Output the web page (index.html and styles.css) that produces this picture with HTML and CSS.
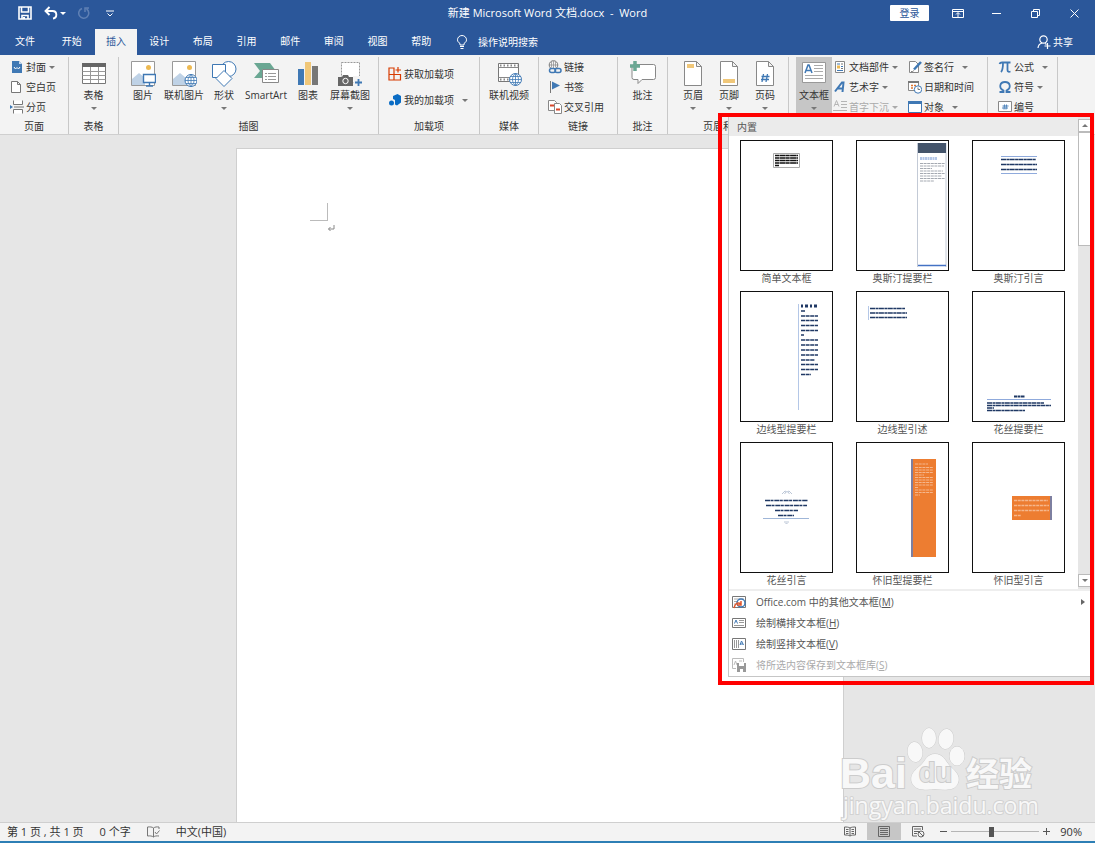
FILE: index.html
```html
<!DOCTYPE html>
<html lang="zh-CN">
<head>
    <meta charset="UTF-8">
    <meta name="viewport" content="width=device-width, initial-scale=1.0">
    <title>新建 Microsoft Word 文档.docx - Word</title>
    <link rel="stylesheet" href="styles.css">
</head>
<body>
    <div class="app">
        <header class="titlebar">
            <div class="quick-access">
                <button class="qa-button" aria-label="保存">
                    <svg width="14" height="14" viewBox="0 0 14 14" fill="none" stroke="#fff" stroke-width="1.6"><path d="M1 1h12v12H1zM3.500 1v5h7V1M4 13V9.500h6V13"/><path d="M6 11v2" stroke-width="2"/></svg>
                </button>
                <button class="qa-button" aria-label="撤消">
                    <svg width="14" height="14" viewBox="0 0 14 14" fill="none" stroke="#fff" stroke-width="1.900"><path d="M5.500 1L1.500 5l4 4M2 5h6.500c5 0 5 7 .500 7.500"/></svg>
                    <i class="caret"></i>
                </button>
                <button class="qa-button" aria-label="重复">
                    <svg width="12" height="12" viewBox="0 0 12 12" fill="none" stroke="#5f80b4" stroke-width="1.500"><path d="M4 1.500a5 5 0 1 0 4.500.500M7 5V1h4"/></svg>
                </button>
                <button class="qa-button" aria-label="自定义快速访问工具栏">
                    <svg width="8" height="7" viewBox="0 0 8 7" fill="none" stroke="#fff"><path d="M0 1h8M1.500 3.500L4 6l2.500-2.500"/></svg>
                </button>
            </div>
            <h1 class="doc-title">新建 Microsoft Word 文档.docx&nbsp; -&nbsp; Word</h1>
            <div class="window-controls">
                <button class="login">登录</button>
                <button class="win-button" aria-label="功能区显示选项"><svg width="12" height="9" viewBox="0 0 12 9" fill="none" stroke="#fff"><path d="M.5.500h11v8H.5zM.5 2.500h11M6 8V4M4 5.500l2-2 2 2"/></svg></button>
                <button class="win-button" aria-label="最小化"><svg width="9" height="9" viewBox="0 0 9 9" stroke="#fff"><path d="M0 4.500h9"/></svg></button>
                <button class="win-button" aria-label="还原"><svg width="9" height="9" viewBox="0 0 9 9" fill="none" stroke="#fff"><path d="M.5 2.500h6v6h-6zM2.500 2.500v-2h6v6h-2"/></svg></button>
                <button class="win-button" aria-label="关闭"><svg width="9" height="9" viewBox="0 0 9 9" stroke="#fff"><path d="M.5.500l8 8M8.500.500l-8 8"/></svg></button>
            </div>
        </header>

        <nav class="tabbar">
            <button class="tab file-tab">文件</button>
            <div class="tabs">
                <button class="tab">开始</button>
                <button class="tab active">插入</button>
                <button class="tab">设计</button>
                <button class="tab">布局</button>
                <button class="tab">引用</button>
                <button class="tab">邮件</button>
                <button class="tab">审阅</button>
                <button class="tab">视图</button>
                <button class="tab">帮助</button>
            </div>
            <button class="tell-me">
                <svg width="12" height="14" viewBox="0 0 12 14" fill="none" stroke="#fff"><path d="M4 10V8.500C2.500 7.500 1.500 6.500 1.500 4.800a4.500 4.300 0 0 1 9 0c0 1.700-1 2.700-2.500 3.700V10zM4 11.500h4M4.500 13.500h3"/></svg>
                操作说明搜索
            </button>
            <button class="share">
                <svg width="14" height="14" viewBox="0 0 14 14" fill="none" stroke="#fff" stroke-width="1.200"><circle cx="6.500" cy="4.500" r="3.700"/><path d="M1 13c.3-3 2-4.500 4.300-5M8 8.500l1.500 1M10.500 8v6M7.500 11h6"/></svg>
                共享
            </button>
        </nav>

        <div class="ribbon">
            <section class="group pages">
                <div class="tools">
                    <div class="stack">
                        <button class="small"><svg width="14" height="14" viewBox="0 0 14 14"><path d="M2 1h7l3 3v9H2z" fill="#3f78b4"/><path d="M9 1v3h3" fill="#c5d9ee"/><path d="M4 7l1.500 2L7 7.500 8.500 9 10 7" fill="none" stroke="#fff"/></svg>封面<i class="caret"></i></button>
                        <button class="small"><svg width="14" height="14" viewBox="0 0 14 14" fill="#fff" stroke="#777"><path d="M1.500 1.500h6l3 3v8h-9zM7.500 1.500v3h3"/></svg>空白页</button>
                        <button class="small"><svg width="14" height="14" viewBox="0 0 14 14" fill="#fff" stroke="#777"><path d="M3.500.500v4h9v-4M3.500 13.500v-4h9v4M4 7h10"/><path d="M0 5l3 2-3 2z" fill="#3f78b4" stroke="none"/></svg>分页</button>
                    </div>
                </div>
                <h2 class="group-name">页面</h2>
            </section>

            <section class="group tables">
                <div class="tools">
                    <button class="big">
                        <svg width="26" height="26" viewBox="0 0 26 26"><path d="M1.500 2.500h23v20h-23z" fill="#fff" stroke="#777"/><path d="M1 2h24v4H1z" fill="#666"/><path d="M1.500 10.500h23M1.500 14.500h23M1.500 18.500h23M9.500 6v16M17.500 6v16" stroke="#999" fill="none"/></svg>
                        <span>表格</span><i class="caret"></i>
                    </button>
                </div>
                <h2 class="group-name">表格</h2>
            </section>

            <section class="group illustrations">
                <div class="tools">
                    <button class="big">
                        <svg width="26" height="26" viewBox="0 0 26 26"><path d="M1.500.500h23v24h-23z" fill="#fff" stroke="#999"/><path d="M2 24v-6l7-6 6 5v7z" fill="#bfd2e6"/><circle cx="18.500" cy="6.500" r="2.500" fill="#edb951"/><path d="M13.500 13.500h12v8h-12zM19.500 21.500v4M16 25h7" fill="#fff" stroke="#3f78b4" stroke-width="1.400"/></svg>
                        <span>图片</span>
                    </button>
                    <button class="big">
                        <svg width="26" height="26" viewBox="0 0 26 26"><path d="M1.500.500h23v24h-23z" fill="#fff" stroke="#999"/><path d="M2 24v-6l7-6 6 5v7z" fill="#bfd2e6"/><circle cx="18.500" cy="6.500" r="2.500" fill="#edb951"/><circle cx="20" cy="19.500" r="6" fill="#fff" stroke="#3f78b4"/><path d="M14 19.500h12M20 13.500v12M15 16.500h10M15 22.500h10M20 13.500c-4 3-4 9 0 12c4-3 4-9 0-12" fill="none" stroke="#3f78b4" stroke-width=".8"/></svg>
                        <span>联机图片</span>
                    </button>
                    <button class="big">
                        <svg width="26" height="26" viewBox="0 0 26 26" fill="#fff" stroke="#3f78b4"><circle cx="17.500" cy="8" r="7.500"/><path d="M1.500 3.500h13v13h-13z"/><path d="M13 9.500l8 8-8 8-8-8z"/></svg>
                        <span>形状</span><i class="caret"></i>
                    </button>
                    <button class="big">
                        <svg width="26" height="26" viewBox="0 0 26 26"><path d="M1 2h16l6 8-6 7H1l6-7z" fill="#6aa793"/><path d="M9.500 8.500h16v13h-16z" fill="#fff" stroke="#888"/><path d="M12 12.500h2M12 15.500h2M12 18.500h2M15 12.500h8M15 15.500h8M15 18.500h8" stroke="#999"/></svg>
                        <span>SmartArt</span>
                    </button>
                    <button class="big">
                        <svg width="26" height="26" viewBox="0 0 26 26"><path d="M3 8h6v16H3z" fill="#3f78b4"/><path d="M10 1h6v23h-6z" fill="#f0c779"/><path d="M17 5h6v19h-6z" fill="#777"/></svg>
                        <span>图表</span>
                    </button>
                    <button class="big">
                        <svg width="26" height="26" viewBox="0 0 26 26"><path d="M4.500 1.500h18v20h-18z" fill="#fff" stroke="#999" stroke-dasharray="2 1"/><path d="M1 16h4l1-2h5l1 2h4v9H1z" fill="#666"/><circle cx="8.500" cy="20" r="2.700" fill="#666" stroke="#fff"/><path d="M16 15h10v11h-9z" fill="#f3f3f3"/><path d="M21.500 18v7M18 21.500h7" stroke="#3f78b4" stroke-width="1.800"/></svg>
                        <span>屏幕截图</span><i class="caret"></i>
                    </button>
                </div>
                <h2 class="group-name">插图</h2>
            </section>

            <section class="group addins">
                <div class="tools">
                    <div class="stack">
                        <button class="small"><svg width="14" height="14" viewBox="0 0 14 14" fill="none" stroke="#d83b01" stroke-width="1.200"><path d="M1 1h5v12H1zM1 7.500h11.500V13H6M10 0v5.500M7.500 3H13"/></svg>获取加载项</button>
                        <button class="small my-addins"><svg width="14" height="14" viewBox="0 0 14 14"><path d="M5 3l4.500-2L13 3v6.500L9 12.500 7 11.500V7L5 6z" fill="#0a6cc4"/><circle cx="3.500" cy="10" r="2.500" fill="#0a6cc4"/></svg>我的加载项<i class="caret"></i></button>
                    </div>
                </div>
                <h2 class="group-name">加载项</h2>
            </section>

            <section class="group media">
                <div class="tools">
                    <button class="big">
                        <svg width="26" height="26" viewBox="0 0 26 26"><path d="M2.500 2.500h20v18h-20z" fill="#fff" stroke="#777"/><path d="M2.500 6.500h20M2.500 16.500h20" stroke="#888"/><path d="M4 4.500h18M4 18.500h18" stroke="#888" stroke-width="2" stroke-dasharray="1.500 2"/><circle cx="19.500" cy="18.500" r="6" fill="#fff" stroke="#3f78b4"/><path d="M13.500 18.500h12M19.500 12.500v12M14.500 15.500h10M14.500 21.500h10M19.500 12.500c-4 3-4 9 0 12c4-3 4-9 0-12" fill="none" stroke="#3f78b4" stroke-width=".8"/></svg>
                        <span>联机视频</span>
                    </button>
                </div>
                <h2 class="group-name">媒体</h2>
            </section>

            <section class="group links">
                <div class="tools">
                    <div class="stack">
                        <button class="small"><svg width="14" height="14" viewBox="0 0 14 14" fill="none"><circle cx="5.500" cy="5" r="4.300" stroke="#777"/><path d="M1 5h9M5.500 1v8M3.500 1.500v6M7.500 1.500v6" stroke="#888" stroke-width=".7"/><rect x="1.500" y="8.500" width="6" height="4" rx="2" stroke="#3f78b4" stroke-width="1.500" fill="#f3f3f3"/><rect x="7" y="8.500" width="6" height="4" rx="2" stroke="#3f78b4" stroke-width="1.500"/></svg>链接</button>
                        <button class="small"><svg width="14" height="14" viewBox="0 0 14 14"><path d="M2.500 1v12" stroke="#777"/><path d="M4 1.500l8 4-8 4z" fill="#3f78b4"/></svg>书签</button>
                        <button class="small"><svg width="14" height="14" viewBox="0 0 14 14" fill="#fff" stroke="#888"><path d="M.5.500h6l2 2v8h-8z"/><path d="M6.500 3.500h5l2 2v8h-7z"/><path d="M2 5.500h4M8 9.500h4" stroke="#d8472b" stroke-width="1.800"/></svg>交叉引用</button>
                    </div>
                </div>
                <h2 class="group-name">链接</h2>
            </section>

            <section class="group comments">
                <div class="tools">
                    <button class="big">
                        <svg width="28" height="26" viewBox="0 0 28 26"><path d="M4.500 3.500h20a2 2 0 0 1 2 2v11a2 2 0 0 1-2 2H13l-4 4v-4H5a2 2 0 0 1-2-2V5z" fill="#fff" stroke="#888"/><path d="M6 0v10M1 5h10" stroke="#6aa793" stroke-width="3.500"/></svg>
                        <span>批注</span>
                    </button>
                </div>
                <h2 class="group-name">批注</h2>
            </section>

            <section class="group header-footer">
                <div class="tools">
                    <button class="big">
                        <svg width="20" height="26" viewBox="0 0 20 26"><path d="M1.500.500h12l5 5v19h-17zM13.500.500v5h5" fill="#fff" stroke="#888"/><path d="M4 3h7v4H4z" fill="#f0c779"/></svg>
                        <span>页眉</span><i class="caret"></i>
                    </button>
                    <button class="big">
                        <svg width="20" height="26" viewBox="0 0 20 26"><path d="M1.500.500h12l5 5v19h-17zM13.500.500v5h5" fill="#fff" stroke="#888"/><path d="M4 18h12v4H4z" fill="#f0c779"/></svg>
                        <span>页脚</span><i class="caret"></i>
                    </button>
                    <button class="big">
                        <svg width="20" height="26" viewBox="0 0 20 26"><path d="M1.500.500h12l5 5v19h-17zM13.500.500v5h5" fill="#fff" stroke="#888"/><path d="M8.500 13l-1.500 8M12.500 13L11 21M6.500 15.500h8M6 18.500h8" stroke="#3f78b4" stroke-width="1.300"/></svg>
                        <span>页码</span><i class="caret"></i>
                    </button>
                </div>
                <h2 class="group-name">页眉和页脚</h2>
            </section>

            <section class="group text">
                <div class="tools">
                    <button class="big pressed">
                        <svg width="26" height="26" viewBox="0 0 26 26"><path d="M1.500 1.500h23v20h-23z" fill="#fff" stroke="#999"/><path d="M4 12l3-8h1l3 8M5.500 9.500h4" fill="none" stroke="#3f78b4" stroke-width="1.500"/><path d="M13 4.500h9M13 7.500h9M13 10.500h9M4 14.500h18M4 17.500h18" stroke="#aaa"/></svg>
                        <span>文本框</span><i class="caret"></i>
                    </button>
                    <div class="stack">
                        <button class="small"><svg width="14" height="14" viewBox="0 0 14 14" fill="#fff"><path d="M2.500 1.500h9v11h-9z" stroke="#888"/><path d="M4 4h3M4 10.500h6M8 6.500h2" stroke="#3f78b4"/><path d="M4 5.500h3v3H4z" fill="#edb951"/><path d="M8 4h2M8 8.500h2" stroke="#777"/></svg>文档部件<i class="caret"></i></button>
                        <button class="small"><svg width="14" height="14" viewBox="0 0 14 14" fill="none" stroke="#3f78b4" stroke-width="2"><path d="M2 11.500L9 2.500h1.500l-1 9.500M5 8.500h5"/></svg>艺术字<i class="caret"></i></button>
                        <button class="small" disabled><svg width="14" height="14" viewBox="0 0 14 14" fill="none" stroke="#b5b5b5"><path d="M1 6.500L3.500.500 6 6.500M2 4.500h3M8 1.500h6M8 4.500h6M8 7.500h6M0 10.500h14M0 13.500h14"/></svg>首字下沉<i class="caret"></i></button>
                    </div>
                    <div class="stack">
                        <button class="small"><svg width="14" height="14" viewBox="0 0 14 14"><path d="M1.500 1.500h6l3 3v8h-9z" fill="#fff" stroke="#888"/><path d="M13 2L6 9.500" stroke="#3f78b4" stroke-width="2.500"/><path d="M3 11.500c2 1 2-1 3-1" stroke="#777" fill="none"/></svg>签名行<i class="caret spaced"></i></button>
                        <button class="small"><svg width="14" height="14" viewBox="0 0 14 14"><path d="M.5 1.500h10v9H.5z" fill="#fff" stroke="#888"/><path d="M0 2h11" stroke="#777" stroke-width="2"/><path d="M3 5.500h2M6 5.500h2M3 8h2" stroke="#dd7632" stroke-width="1.600"/><circle cx="10" cy="9.500" r="3.700" fill="#fff" stroke="#3f78b4"/><path d="M10 7.500v2h2" fill="none" stroke="#777"/></svg>日期和时间</button>
                        <button class="small"><svg width="14" height="14" viewBox="0 0 14 14"><path d="M.5 1.500h13v11H.5z" fill="#fff" stroke="#3f78b4"/><path d="M0 1h14v3H0z" fill="#3f78b4"/></svg>对象<i class="caret spaced"></i></button>
                    </div>
                </div>
                <h2 class="group-name">文本</h2>
            </section>

            <section class="group symbols">
                <div class="tools">
                    <div class="stack">
                        <button class="small"><svg width="14" height="14" viewBox="0 0 14 14" fill="none" stroke="#3f78b4" stroke-width="1.800"><path d="M1.500 4c.500-1.500 1.500-1.500 2.500-1.500h8.500M5 3c0 4 0 7-2 9M9.500 3v7c0 2 1.500 2 3 1.500"/></svg>公式<i class="caret spaced"></i></button>
                        <button class="small"><svg width="14" height="14" viewBox="0 0 14 14" fill="none" stroke="#3f78b4" stroke-width="1.800"><path d="M1.500 12h4v-1.500C.5 8 1.500 2 7 2s6.500 6 1.500 8.500V12h4"/></svg>符号<i class="caret"></i></button>
                        <button class="small"><svg width="14" height="14" viewBox="0 0 14 14"><path d="M.5 1.500h13v10H.5z" fill="#fff" stroke="#888"/><path d="M6.500 4.500l-.5 5M8.500 4.500l-.5 5M4.500 6h6M4 8h6" stroke="#3f78b4" stroke-width=".9"/></svg>编号</button>
                    </div>
                </div>
                <h2 class="group-name">符号</h2>
            </section>
        </div>

        <main class="workspace">
            <div class="page">
                <div class="margin-corner"></div>
                <svg class="paragraph-mark" width="8" height="7" viewBox="0 0 8 7" fill="none" stroke="#888"><path d="M7 0v4H1.500M3.500 2l-2 2 2 2"/></svg>
            </div>
        </main>

        <footer class="statusbar">
            <span>第 1 页 , 共 1 页</span>
            <span>0 个字</span>
            <svg width="13" height="12" viewBox="0 0 13 12" fill="none" stroke="#777"><path d="M6.500 2C5 .800 3 .800.500 1v9c2.500-.200 4.500-.200 6 1 1.500-1.200 3-1.200 5.500-1M6.500 2v9M6.500 2C8 .800 10 .800 12 1v2M8 6l1.500 2L12.500 4.500"/></svg>
            <span>中文(中国)</span>
            <div class="views">
                <button class="view" aria-label="阅读视图"><svg width="12" height="11" viewBox="0 0 12 11" fill="none" stroke="#666"><path d="M6 2C4.500 1 2.500 1 .5 1v8c2 0 4 0 5.500 1 1.500-1 3.500-1 5.500-1V1C9.500 1 7.500 1 6 2zM6 2v8M2 3.500h2.500M2 5.500h2.500M2 7.500h2.500M7.500 3.500H10M7.500 5.500H10M7.500 7.500H10"/></svg></button>
                <button class="view current" aria-label="页面视图"><svg width="12" height="11" viewBox="0 0 12 11" fill="none" stroke="#666"><path d="M.5.500h11v10H.5zM2 2.500h8M2 4.500h8M2 6.500h8M2 8.500h8"/></svg></button>
                <button class="view" aria-label="Web 版式视图"><svg width="13" height="12" viewBox="0 0 13 12" fill="none" stroke="#666"><path d="M10.500 4V.500H.5v9.500H5M2 3h7M2 5.500h5M2 7.500h3"/><circle cx="9" cy="8" r="3"/><path d="M7 6l4 4"/></svg></button>
            </div>
            <div class="zoom">
                <button class="zoom-step" aria-label="缩小"><svg width="7" height="7" viewBox="0 0 7 7" stroke="#555"><path d="M0 3.500h7"/></svg></button>
                <input class="zoom-slider" type="range" min="10" max="170" value="83" aria-label="显示比例">
                <button class="zoom-step" aria-label="放大"><svg width="7" height="7" viewBox="0 0 7 7" stroke="#555"><path d="M0 3.500h7M3.500 0v7"/></svg></button>
            </div>
            <span class="percent">90%</span>
        </footer>
    </div>

    <div class="callout">
        <div class="dropdown">
            <div class="gallery-area">
                <div class="gallery">
                    <h3 class="gallery-title">内置</h3>
                    <div class="gallery-grid">
                        <button class="preset">
                            <svg class="thumb" viewBox="0 0 91 129"><path d="M32.500 12.500h26v14h-26z" fill="#fff" stroke="#aaa"/><path d="M34 14.500h23M34 17h23M34 19.500h23M34 22h23M34 24.500h4" stroke="#111" stroke-width="1.500" stroke-dasharray="4 .4 6 .3"/></svg>
                            <span>简单文本框</span>
                        </button>
                        <button class="preset">
                            <svg class="thumb" viewBox="0 0 91 129"><path d="M60.500 2v124M89 2v124" stroke="#c3cad6"/><path d="M61 2h28v10H61z" fill="#44546a"/><path d="M63 17.500h17" stroke="#b4c7e7" stroke-width="3" stroke-dasharray="2 .5"/><path d="M63 22.500h25M63 25h24M63 27.500h12M63 30h23M63 32.500h25M63 35h22M63 37.500h25M63 40h14" stroke="#a4a9b1" stroke-dasharray="3 .6"/><path d="M61 124.500h28" stroke="#4472c4" stroke-width="1.500"/></svg>
                            <span>奥斯汀提要栏</span>
                        </button>
                        <button class="preset">
                            <svg class="thumb" viewBox="0 0 91 129"><path d="M28 15.500h36M28 32.500h36" stroke="#8faadc"/><path d="M28 18.500h35M28 23.500h36M28 28.500h36" stroke="#1f3864" stroke-width="1.700" stroke-dasharray="5 .4 3 .3"/></svg>
                            <span>奥斯汀引言</span>
                        </button>
                        <button class="preset">
                            <svg class="thumb" viewBox="0 0 91 129"><path d="M57.500 12v106" stroke="#b4c7e7"/><path d="M60 14h17" stroke="#1f3864" stroke-width="3" stroke-dasharray="2 2 3 2"/><path d="M60 19h4M60 24h17M60 28.500h17M60 33.500h17M60 38.500h17M60 43h3M60 48h17M60 53h17M60 58h17M60 63h17M60 68h14M60 72.500h17M60 77.500h17M60 82.500h10" stroke="#1f3864" stroke-width="1.700" stroke-dasharray="4 .6"/></svg>
                            <span>边线型提要栏</span>
                        </button>
                        <button class="preset">
                            <svg class="thumb" viewBox="0 0 91 129"><path d="M11.500 14v14" stroke="#b4c7e7"/><path d="M13 16.500h35M13 21h37M13 25.500h37" stroke="#1f3864" stroke-width="1.700" stroke-dasharray="5 .5 3 .4"/></svg>
                            <span>边线型引述</span>
                        </button>
                        <button class="preset">
                            <svg class="thumb" viewBox="0 0 91 129"><path d="M41 104.500h11" stroke="#1f3864" stroke-width="2" stroke-dasharray="3 .5"/><path d="M14 107.500h64" stroke="#8faadc"/><path d="M14 111h57M14 113.500h64M14 116h7M14 118.500h38" stroke="#1f3864" stroke-width="1.700" stroke-dasharray="5 .5 3 .4"/></svg>
                            <span>花丝提要栏</span>
                        </button>
                        <button class="preset">
                            <svg class="thumb" viewBox="0 0 91 129"><path d="M41 51l3-3 2 1 2-1 3 3M43.500 51l1.500-2M48.500 51L47 49M43 79h5M44.500 80l1 1 1-1" fill="none" stroke="#a9b7cc" stroke-width=".8"/><path d="M24 57.500h43M25 62.500h41M34 67.500h23M37 72.500h16" stroke="#1f3864" stroke-width="1.700" stroke-dasharray="5 .5 3 .8"/><path d="M22 75.500h46" stroke="#9fb6d8"/></svg>
                            <span>花丝引言</span>
                        </button>
                        <button class="preset">
                            <svg class="thumb" viewBox="0 0 91 129"><path d="M54 16h2v98h-2z" fill="#7d7fa0"/><path d="M56 16h23v98H56z" fill="#ed7d31"/><path d="M58 21h13M58 24.500h18M58 27h18M58 29.500h18M58 32h9M58 34.500h18M58 37h18M58 39.500h18M58 42h18M58 44.500h3M58 47h18M58 49.500h18M58 52h5" stroke="#f5b78d" stroke-dasharray="3 .7"/></svg>
                            <span>怀旧型提要栏</span>
                        </button>
                        <button class="preset">
                            <svg class="thumb" viewBox="0 0 91 129"><path d="M39 53h38v24H39z" fill="#ed7d31"/><path d="M77 53h2v24h-2z" fill="#7d7fa0"/><path d="M41 57.500h34M41 62.500h35M41 67.500h35M41 72.500h7" stroke="#f5b78d" stroke-width="1.500" stroke-dasharray="3 .7"/></svg>
                            <span>怀旧型引言</span>
                        </button>
                    </div>
                </div>
                <div class="scrollbar">
                    <button class="scroll-button" aria-label="向上滚动"><i class="caret up"></i></button>
                    <div class="scroll-thumb"></div>
                    <button class="scroll-button" aria-label="向下滚动"><i class="caret"></i></button>
                </div>
            </div>
            <div class="menu">
                <button class="menu-item">
                    <svg width="14" height="14" viewBox="0 0 14 14" fill="none"><path d="M.5 1.500h13v11H.5z" fill="#fff" stroke="#777"/><path d="M2 4h10M2 6.500h3M2 9h2" stroke="#aaa"/><circle cx="9" cy="8" r="4" fill="#fff" stroke="#3f78b4" stroke-width="1.500"/><path d="M2 13c1-5 4-6 7-4M9 6v4H5" stroke="#e0562c" stroke-width="1.500"/></svg>
                    <span>Office.com 中的其他文本框(<u>M</u>)</span><i class="caret right"></i>
                </button>
                <button class="menu-item">
                    <svg width="14" height="14" viewBox="0 0 14 14" fill="none"><path d="M.5 2.500h13v9H.5z" fill="#fff" stroke="#777"/><path d="M2.500 7.500L4 4l1.500 3.500" stroke="#3f78b4"/><path d="M7 4.500h5M7 6.500h5M2 9.500h10" stroke="#999"/></svg>
                    <span>绘制横排文本框(<u>H</u>)</span>
                </button>
                <button class="menu-item">
                    <svg width="14" height="14" viewBox="0 0 14 14" fill="none"><path d="M.5 1.500h13v11H.5z" fill="#fff" stroke="#777"/><path d="M8 8L9.500 4l2 4M8 7h3" stroke="#3f78b4"/><path d="M2.500 3v8M4.500 3v8M6.500 3v8" stroke="#999"/></svg>
                    <span>绘制竖排文本框(<u>V</u>)</span>
                </button>
                <button class="menu-item" disabled>
                    <svg width="14" height="14" viewBox="0 0 14 14" fill="none"><path d="M11.500 4V.500H.5v10H4M2 7l1.500-4L5 7M7 3h3" stroke="#bbb"/><path d="M5 5h9v9H5z" fill="#999"/><path d="M7 5h5v3H7zM8 11h3v3H8z" fill="#fff"/></svg>
                    <span>将所选内容保存到文本框库(<u>S</u>)</span>
                </button>
            </div>
        </div>
    </div>

    <svg class="watermark" width="200" height="96" viewBox="0 0 200 96" fill="#f8f8f8" stroke="#ccc">
        <text class="wm-logo" x="1" y="63">Bai</text>
        <ellipse cx="76" cy="27" rx="7.500" ry="10" transform="rotate(-8 76 27)"/>
        <ellipse cx="90" cy="13" rx="7" ry="10"/>
        <ellipse cx="107" cy="14" rx="7.500" ry="10" transform="rotate(8 107 14)"/>
        <ellipse cx="118" cy="31" rx="7.500" ry="9.500"/>
        <path d="M96 29c8 0 10 6 14 11 5 5 12 10 9 18-3 8-12 7-23 6-10 1-19 2-23-6-3-8 3-13 9-18 5-5 6-11 14-11z"/>
        <text class="wm-du" x="80" y="57">du</text>
        <text class="wm-cjk" x="127" y="61">经验</text>
        <text class="wm-url" x="4" y="89">jingyan.baidu.com</text>
    </svg>
</body>
</html>
```

FILE: styles.css
```css
* {
    box-sizing: border-box;
}
body {
    margin: 0;
    font-family: "Open Sans", "Noto Sans CJK SC", sans-serif;
    font-size: 10px;
    line-height: 14px;
    color: #333;
    overflow: hidden;
}
button {
    font: inherit;
    color: inherit;
    background: none;
    border: none;
    padding: 0;
}
svg {
    flex: none;
    display: block;
}
h1, h2, h3 {
    margin: 0;
    font-size: 10px;
    font-weight: normal;
}
.app {
    display: flex;
    flex-direction: column;
    height: 100vh;
    background: #e6e6e6;
}
.caret {
    flex: none;
    border: 3px solid transparent;
    border-top-color: #777;
    border-bottom-width: 0;
}
.caret.up {
    border-width: 0 3px 3px;
    border-color: transparent transparent #777;
}
.caret.right {
    border-width: 3px 0 3px 4px;
    border-color: transparent transparent transparent #666;
}

/* title bar */
.titlebar {
    display: grid;
    grid-template-columns: 1fr auto 1fr;
    align-items: center;
    height: 28px;
    padding-bottom: 2px;
    background: #2b579a;
    color: #fff;
}
.quick-access {
    display: flex;
    align-items: center;
    gap: 12px;
    padding-left: 18px;
}
.qa-button {
    display: flex;
    align-items: center;
    gap: 2px;
}
.qa-button:last-child {
    margin-left: 4px;
}
.titlebar .caret {
    border-top-color: #fff;
}
.doc-title {
    font-size: 11px;
}
.window-controls {
    display: flex;
    justify-content: flex-end;
    align-items: center;
    padding-right: 1px;
}
.login {
    width: 39px;
    height: 16px;
    margin-right: 9px;
    background: #fff;
    color: #2b579a;
    border-radius: 1px;
}
.win-button {
    display: flex;
    justify-content: center;
    width: 39px;
}

/* tabs */
.tabbar {
    display: flex;
    height: 27px;
    background: #2b579a;
    color: #fff;
}
.tab {
    padding-bottom: 2px;
}
.file-tab {
    width: 50px;
}
.tabs {
    display: grid;
    grid-template-columns: repeat(9, 1fr);
    width: 393px;
}
.tab.active {
    margin: 1px 0 0 1px;
    background: #f3f3f3;
    color: #2b579a;
}
.tell-me {
    display: flex;
    align-items: center;
    gap: 10px;
    margin-left: 13px;
}
.share {
    display: flex;
    align-items: center;
    gap: 2px;
    margin-left: auto;
    padding-right: 22px;
}

/* ribbon */
.ribbon {
    display: flex;
    height: 80px;
    background: #f3f3f3;
    border-bottom: 1px solid #cfcfcf;
}
.group {
    display: flex;
    flex-direction: column;
    flex: none;
    margin-top: 2px;
    border-right: 1px solid #c8c8c8;
}
.tools {
    display: grid;
    height: 61px;
}
.group-name {
    text-align: center;
    line-height: 16px;
}
.stack {
    display: grid;
    grid-auto-rows: 20px;
}
.small {
    display: flex;
    align-items: center;
    gap: 2px;
    white-space: nowrap;
}
.small .caret {
    margin-left: 1px;
}
.small .caret.spaced {
    margin-left: 6px;
}
.small:disabled, .menu-item:disabled {
    color: #aaa;
}
.small:disabled .caret {
    border-top-color: #aaa;
}
.big {
    display: flex;
    flex-direction: column;
    align-items: center;
    padding-top: 4px;
    white-space: nowrap;
}
.big span {
    margin: 1px 0 5px;
}
.pressed {
    background: #c6c6c6;
}
.pages {
    width: 69px;
}
.pages .tools {
    padding-left: 10px;
}
.tables, .comments {
    width: 50px;
}
.illustrations {
    width: 260px;
}
.illustrations .tools {
    grid-template-columns: 36px 46px 34px 50px 34px 50px;
    padding-left: 6px;
}
.addins {
    width: 101px;
}
.addins .tools {
    padding: 4px 0 0 9px;
}
.addins .stack {
    grid-auto-rows: 26px;
}
.my-addins .caret {
    margin-left: 6px;
}
.media {
    width: 59px;
}
.links {
    width: 79px;
}
.links .tools {
    padding-left: 9px;
}
.header-footer {
    width: 121px;
}
.header-footer .tools {
    grid-template-columns: repeat(3, 36px);
    padding-left: 7px;
}
.text {
    width: 199px;
}
.text .tools {
    grid-template-columns: 36px 74px 78px;
    column-gap: 1px;
    padding-left: 7px;
}
.symbols {
    width: 70px;
}
.symbols .tools {
    padding-left: 10px;
}

/* document */
.workspace {
    flex: 1;
    min-height: 0;
    display: flex;
    justify-content: center;
    padding: 13px 15px 0 0;
}
.page {
    width: 608px;
    background: #fff;
    border: 1px solid #cfcfcf;
    border-bottom: none;
    padding: 54px 0 0 73px;
}
.margin-corner {
    width: 18px;
    height: 18px;
    border: solid #bbb;
    border-width: 0 1px 1px 0;
}
.paragraph-mark {
    margin: 4px 0 0 17px;
}

/* status bar */
.statusbar {
    display: flex;
    align-items: center;
    height: 21px;
    padding: 0 0 1px 7px;
    gap: 16px;
    font-size: 11px;
    background: #f3f3f3;
    border-top: 1px solid #cfcfcf;
    border-bottom: 2px solid #2d7fb5;
}
.views {
    display: flex;
    align-self: stretch;
    margin-left: auto;
}
.view {
    display: flex;
    align-items: center;
    justify-content: center;
    width: 34px;
}
.view.current {
    background: #c6c6c6;
}
.zoom {
    display: flex;
    align-items: center;
    gap: 4px;
    margin-left: -11px;
}
.zoom-slider {
    appearance: none;
    width: 88px;
    height: 12px;
    margin: 0;
    background: linear-gradient(#b5b5b5, #b5b5b5) center / 100% 1px no-repeat;
}
.zoom-slider::-webkit-slider-thumb {
    appearance: none;
    width: 5px;
    height: 10px;
    background: #555;
}
.percent {
    padding-right: 13px;
    margin-left: -6px;
}

/* text box gallery */
.callout {
    position: absolute;
    top: 113px;
    right: 1px;
    width: 376px;
    padding-left: 6px;
    padding-bottom: 4px;
    border: 4px solid #f00;
}
.dropdown {
    background: #fff;
    border: 1px solid #c6c6c6;
    border-width: 0 0 1px 1px;
    color: #555;
}
.gallery-area {
    display: flex;
    border-bottom: 2px solid #eee;
}
.gallery {
    flex: 1;
}
.gallery-title {
    height: 19px;
    padding-left: 8px;
    line-height: 20px;
    background: #ebebeb;
}
.gallery-grid {
    display: grid;
    grid-template-columns: repeat(3, 93px);
    gap: 4px 23px;
    padding: 4px 0 0 11px;
}
.preset {
    display: flex;
    flex-direction: column;
    height: 147px;
    text-align: center;
}
.preset span {
    align-self: center;
}
.thumb {
    width: 93px;
    height: 131px;
    border: 1px solid #111;
}
.scrollbar {
    display: flex;
    flex-direction: column;
    width: 12px;
    padding: 2px 0;
    background: #e6e6e6;
}
.scroll-button {
    display: flex;
    align-items: center;
    justify-content: center;
    height: 13px;
    background: #fff;
    border: 1px solid #bbb;
    border-right: none;
}
.scroll-thumb {
    height: 114px;
    margin-bottom: auto;
    background: #fff;
    border: 1px solid #bbb;
    border-right: none;
}
.menu {
    padding-bottom: 1px;
}
.menu-item {
    display: flex;
    align-items: center;
    gap: 10px;
    width: 100%;
    height: 21px;
    padding: 0 5px 0 3px;
}
.menu-item .caret {
    margin-left: auto;
}

/* watermark */
.watermark {
    position: absolute;
    right: 56px;
    bottom: 22px;
    overflow: visible;
    paint-order: stroke;
}
.wm-logo, .wm-du {
    font-family: "Liberation Sans", sans-serif;
    font-weight: bold;
    font-size: 43px;
    stroke-width: 2px;
}
.wm-du {
    font-size: 27px;
    fill: #e6e6e6;
}
.wm-cjk {
    font-family: "Noto Sans CJK SC", sans-serif;
    font-weight: bold;
    font-size: 33px;
    stroke-width: 2px;
}
.wm-url {
    font-size: 23px;
    stroke: #d2d2d2;
    stroke-width: 2px;
}
```
